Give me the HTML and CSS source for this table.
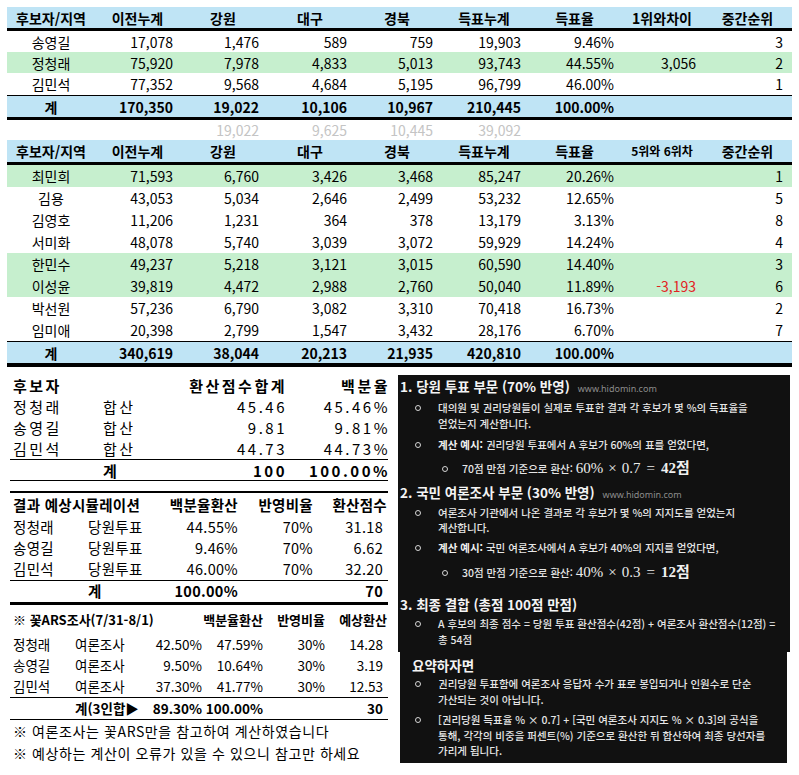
FILE: index.html
```html
<!DOCTYPE html>
<html lang="ko">
<head>
<meta charset="utf-8">
<title>중간집계</title>
<link rel="stylesheet" href="styles.css">
</head>
<body>
<div class="sheet">
  <div class="r hd"><span>후보자/지역</span><span>이전누계</span><span>강원</span><span>대구</span><span>경북</span><span>득표누계</span><span>득표율</span><span>1위와차이</span><span>중간순위</span></div>
  <div class="r"><span>송영길</span><span>17,078</span><span>1,476</span><span>589</span><span>759</span><span>19,903</span><span>9.46%</span><span></span><span>3</span></div>
  <div class="r g"><span>정청래</span><span>75,920</span><span>7,978</span><span>4,833</span><span>5,013</span><span>93,743</span><span>44.55%</span><span>3,056</span><span>2</span></div>
  <div class="r h22"><span>김민석</span><span>77,352</span><span>9,568</span><span>4,684</span><span>5,195</span><span>96,799</span><span>46.00%</span><span></span><span>1</span></div>
  <div class="r tot"><span>계</span><span>170,350</span><span>19,022</span><span>10,106</span><span>10,967</span><span>210,445</span><span>100.00%</span><span></span><span></span></div>
  <div class="r ghost"><span></span><span></span><span>19,022</span><span>9,625</span><span>10,445</span><span>39,092</span><span></span><span></span><span></span></div>

  <div class="r hd hd2"><span>후보자/지역</span><span>이전누계</span><span>강원</span><span>대구</span><span>경북</span><span>득표누계</span><span>득표율</span><span class="sm">5위와 6위차</span><span>중간순위</span></div>
  <div class="r h22 g"><span>최민희</span><span>71,593</span><span>6,760</span><span>3,426</span><span>3,468</span><span>85,247</span><span>20.26%</span><span></span><span>1</span></div>
  <div class="r h22"><span>김용</span><span>43,053</span><span>5,034</span><span>2,646</span><span>2,499</span><span>53,232</span><span>12.65%</span><span></span><span>5</span></div>
  <div class="r h22"><span>김영호</span><span>11,206</span><span>1,231</span><span>364</span><span>378</span><span>13,179</span><span>3.13%</span><span></span><span>8</span></div>
  <div class="r h22"><span>서미화</span><span>48,078</span><span>5,740</span><span>3,039</span><span>3,072</span><span>59,929</span><span>14.24%</span><span></span><span>4</span></div>
  <div class="r h22 g"><span>한민수</span><span>49,237</span><span>5,218</span><span>3,121</span><span>3,015</span><span>60,590</span><span>14.40%</span><span></span><span>3</span></div>
  <div class="r h22 g"><span>이성윤</span><span>39,819</span><span>4,472</span><span>2,988</span><span>2,760</span><span>50,040</span><span>11.89%</span><span class="red">-3,193</span><span>6</span></div>
  <div class="r h22"><span>박선원</span><span>57,236</span><span>6,790</span><span>3,082</span><span>3,310</span><span>70,418</span><span>16.73%</span><span></span><span>2</span></div>
  <div class="r h22"><span>임미애</span><span>20,398</span><span>2,799</span><span>1,547</span><span>3,432</span><span>28,176</span><span>6.70%</span><span></span><span>7</span></div>
  <div class="r tot tot2"><span>계</span><span>340,619</span><span>38,044</span><span>20,213</span><span>21,935</span><span>420,810</span><span>100.00%</span><span></span><span></span></div>
</div>

<div class="bottom">
  <div class="left">
    <div class="ta">
      <div class="row thd h22"><span>후보자</span><span></span><span class="ovr">환산점수합계</span><span>백분율</span></div>
      <div class="row h22"><span>정청래</span><span>합산</span><span>45.46</span><span>45.46%</span></div>
      <div class="row"><span>송영길</span><span>합산</span><span>9.81</span><span>9.81%</span></div>
      <div class="row h22"><span>김민석</span><span>합산</span><span>44.73</span><span>44.73%</span></div>
      <div class="row ttot"><span></span><span class="b">계</span><span class="b">100</span><span class="b">100.00%</span></div>
    </div>

    <div class="tb">
      <div class="row thd"><span class="span2">결과 예상시뮬레이션</span><span>백분율환산</span><span>반영비율</span><span class="hl">환산점수</span></div>
      <div class="row h22"><span>정청래</span><span>당원투표</span><span>44.55%</span><span>70%</span><span>31.18</span></div>
      <div class="row h22"><span>송영길</span><span>당원투표</span><span>9.46%</span><span>70%</span><span>6.62</span></div>
      <div class="row h22"><span>김민석</span><span>당원투표</span><span>46.00%</span><span>70%</span><span>32.20</span></div>
      <div class="row btot"><span></span><span class="b">계</span><span class="b">100.00%</span><span></span><span class="b">70</span></div>
    </div>

    <div class="tc">
      <div class="row thd"><span class="span3">※ 꽃ARS조사(7/31-8/1)</span><span>백분율환산</span><span>반영비율</span><span class="hl">예상환산</span></div>
      <div class="row h22"><span>정청래</span><span>여론조사</span><span>42.50%</span><span>47.59%</span><span>30%</span><span>14.28</span></div>
      <div class="row h22"><span>송영길</span><span>여론조사</span><span>9.50%</span><span>10.64%</span><span>30%</span><span>3.19</span></div>
      <div class="row h22"><span>김민석</span><span>여론조사</span><span>37.30%</span><span>41.77%</span><span>30%</span><span>12.53</span></div>
      <div class="row ctot"><span></span><span class="b">계(3인합▶</span><span class="b">89.30%</span><span class="b">100.00%</span><span></span><span class="b">30</span></div>
    </div>

    <p class="note">※ 여론조사는 꽃ARS만을 참고하여 계산하였습니다</p>
    <p class="note">※ 예상하는 계산이 오류가 있을 수 있으니 참고만 하세요</p>
  </div>

  <div class="panels">
    <div class="pn p1">
      <div class="h">1. 당원 투표 부문 (70% 반영)<span class="wm">www.hidomin.com</span></div>
      <div class="li m5"><i class="dot"></i><div class="tx">대의원 및 권리당원들이 실제로 투표한 결과 각 후보가 몇 %의 득표율을<br>얻었는지 계산합니다.</div></div>
      <div class="li m6"><i class="dot"></i><div class="tx"><b>계산 예시:</b> 권리당원 투표에서 A 후보가 60%의 표를 얻었다면,</div></div>
      <div class="li sub m6"><i class="dot"></i><div class="tx">70점 만점 기준으로 환산: <span class="math">60%<span class="op">×</span>0.7<span class="rel">=</span><b>42점</b></span></div></div>
      <div class="h m4">2. 국민 여론조사 부문 (30% 반영)<span class="wm">www.hidomin.com</span></div>
      <div class="li m4"><i class="dot"></i><div class="tx">여론조사 기관에서 나온 결과로 각 후보가 몇 %의 지지도를 얻었는지<br>계산합니다.</div></div>
      <div class="li m4"><i class="dot"></i><div class="tx"><b>계산 예시:</b> 국민 여론조사에서 A 후보가 40%의 지지를 얻었다면,</div></div>
      <div class="li sub m8"><i class="dot"></i><div class="tx">30점 만점 기준으로 환산: <span class="math">40%<span class="op">×</span>0.3<span class="rel">=</span><b>12점</b></span></div></div>
      <div class="h m12">3. 최종 결합 (총점 100점 만점)</div>
      <div class="li m3"><i class="dot"></i><div class="tx">A 후보의 최종 점수 = 당원 투표 환산점수(42점) + 여론조사 환산점수(12점) =<br>총 54점</div></div>
    </div>
    <div class="pn p2">
      <div class="h">요약하자면</div>
      <div class="li m2"><i class="dot"></i><div class="tx">권리당원 투표함에 여론조사 응답자 수가 표로 봉입되거나 인원수로 단순<br>가산되는 것이 아닙니다.</div></div>
      <div class="li m5"><i class="dot"></i><div class="tx">[권리당원 득표율 % × 0.7] + [국민 여론조사 지지도 % × 0.3]의 공식을<br>통해, 각각의 비중을 퍼센트(%) 기준으로 환산한 뒤 합산하여 최종 당선자를<br>가리게 됩니다.</div></div>
    </div>
  </div>
</div>
</body>
</html>
```

FILE: styles.css
```css
* { box-sizing: border-box; margin: 0; padding: 0; }

body {
  background: #fff;
  font-family: "Noto Sans CJK KR", "Noto Sans", sans-serif;
  color: #000;
  width: 799px;
}

/* ---------- top spreadsheet ---------- */
.sheet {
  margin: 7px 0 0 7px;
  width: 785px;
}

.r {
  display: grid;
  grid-template-columns: 88px 85px 86px 88px 86px 88px 93px 82px 89px;
  height: 21px;
  align-items: center;
  font-size: 14px;
  line-height: 1;
}

.r > span {
  text-align: right;
  padding-right: 7px;
  white-space: nowrap;
}

.r > span:first-child {
  text-align: center;
  padding-right: 0;
}

.r > span:last-child { padding-right: 9px; }

.h22 { height: 22px; }

.g { background: #c6efce; }

.hd {
  background: #bfe4f5;
  height: 24px;
  border-bottom: 3px solid #000;
  font-weight: 700;
}

.hd > span,
.hd > span:last-child {
  text-align: center;
  padding-right: 0;
}

.hd2 { height: 25px; }

.hd .sm { font-size: 12px; }

.tot {
  background: #bfe4f5;
  height: 25px;
  border-top: 1px solid #000;
  border-bottom: 3px solid #000;
  font-weight: 700;
}

.tot2 {
  height: 26px;
  border-bottom-width: 4px;
}

.ghost {
  height: 20px;
  color: #c4c4c4;
}

.red { color: #e2231f; }

/* ---------- bottom area ---------- */
.bottom {
  display: flex;
  align-items: flex-start;
  margin-top: 8px;
}

.left {
  margin-left: 10px;
  width: 378px;
}

.row {
  display: grid;
  height: 21px;
  align-items: center;
  line-height: 1;
  white-space: nowrap;
}

.row > span:first-child { padding-left: 3px; }

.b { font-weight: 700; }

/* table A */
.ta {
  font-size: 15px;
  letter-spacing: 2.5px;
}

.ta .row { grid-template-columns: 93px 80px 102px 103px; }

.ta .row > span:nth-child(3),
.ta .row > span:nth-child(4) { text-align: right; margin-right: -2px; }

.ta .thd { font-weight: 700; }

.ta .thd .ovr { margin-right: -9px; }

.ttot {
  height: 22px;
  border-top: 1px solid #000;
  border-bottom: 1px solid #000;
}

/* table B */
.tb {
  margin-top: 10px;
  font-size: 14.5px;
  letter-spacing: 0.3px;
}

.tb .row { grid-template-columns: 78px 72px 78px 75px 75px; }

.tb .row > span:nth-child(n+3) { text-align: right; }
.tb .row > span:nth-child(5) { padding-right: 5px; }

.tb .thd {
  height: 26px;
  border-top: 2px solid #000;
  font-weight: 700;
}

.tb .thd > span:nth-child(n+2) { text-align: right; }
.tb .thd .hl { padding-right: 1px; }

.span2 { grid-column: span 2; }
.span3 { grid-column: span 3; }

.btot {
  height: 25px;
  border-top: 1px solid #000;
  border-bottom: 3px solid #000;
}

/* table C */
.tc { font-size: 13.5px; }

.tc .row { grid-template-columns: 65px 60px 67px 61px 62px 63px; }

.tc .row > span:nth-child(n+3) { text-align: right; }
.tc .row > span:nth-child(6) { padding-right: 5px; }

.tc .thd {
  height: 29px;
  font-size: 13px;
  font-weight: 700;
}

.tc .thd > span:nth-child(n+2) { text-align: right; }
.tc .thd .hl { padding-right: 1px; }

.ctot {
  height: 23px;
  border-top: 1px solid #000;
  border-bottom: 1px solid #000;
}

.note {
  font-size: 14px;
  letter-spacing: 0.6px;
  line-height: 22px;
  padding-left: 3px;
  white-space: nowrap;
}

/* ---------- dark panels ---------- */
.panels {
  margin-left: 10px;
  width: 392px;
}

.pn {
  background: #111;
  color: #e6e6e6;
  overflow: hidden;
}

.p1 {
  height: 277px;
  padding: 2px 0 0 2px;
}

.p2 {
  margin-left: 2px;
  width: 387px;
  height: 111px;
  padding-top: 4px;
}

.h {
  font-size: 13.5px;
  font-weight: 700;
  line-height: 18px;
  height: 18px;
  color: #f4f4f4;
  white-space: nowrap;
}

.p2 .h { padding-left: 12px; }

.wm {
  font-size: 9px;
  line-height: 1;
  font-weight: 400;
  color: #8c8c8c;
  margin-left: 8px;
  font-family: "Noto Sans", sans-serif;
}

.li {
  display: flex;
  align-items: flex-start;
  padding-left: 15px;
  font-size: 10.5px;
  line-height: 15.5px;
  font-weight: 500;
}

.dot {
  flex: none;
  width: 6px;
  height: 6px;
  margin-top: 5px;
  border: 1.3px solid #d6d6d6;
  border-radius: 50%;
}

.tx {
  margin-left: 17px;
  white-space: nowrap;
  line-height: 15.5px;
}

.tx b { font-weight: 700; color: #f0f0f0; }

.sub {
  padding-left: 42px;
  line-height: 20px;
  height: 20px;
}

.sub .tx { margin-left: 14px; line-height: 20px; }

.sub .dot { margin-top: 7px; }

.math {
  font-family: "Liberation Serif", "DejaVu Serif", serif;
  font-size: 15px;
  line-height: 1;
  color: #ececec;
}

.math b { font-family: "Liberation Serif", "Noto Sans CJK KR", serif; font-size: 15px; }

.op { margin: 0 5px; }
.rel { margin: 0 6px; }

.m2 { margin-top: 2px; }
.m3 { margin-top: 3px; }
.m4 { margin-top: 4px; }
.m5 { margin-top: 5px; }
.m6 { margin-top: 6px; }
.m8 { margin-top: 8px; }
.m12 { margin-top: 12px; }
```
